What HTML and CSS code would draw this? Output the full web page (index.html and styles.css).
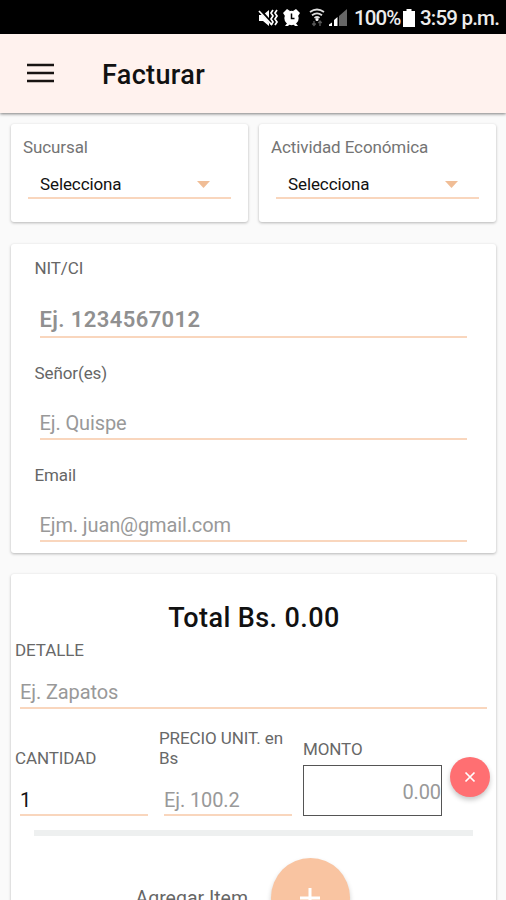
FILE: index.html
```html
<!DOCTYPE html>
<html lang="es">
<head>
<meta charset="utf-8">
<title>Facturar</title>
<link rel="stylesheet" href="styles.css">
</head>
<body>
<div class="status">
  <svg class="status-icons" width="92" height="20" viewBox="0 0 92 20" fill="#fff">
    <path d="M1 7h4l6-5v16l-6-5H1z"/>
    <path d="M2 2l13 15" stroke="#000" stroke-width="3"/>
    <path d="M1 3l13 14" stroke="#fff" stroke-width="1.7"/>
    <path d="M15 2l-2 3 2 3-2 3 2 3-2 3M19 2l-2 3 2 3-2 3 2 3-2 3" fill="none" stroke="#fff" stroke-width="1.7"/>
    <circle cx="33.500" cy="10" r="7.200"/>
    <path d="M25 5l4-4 3 2-5 5zM42 5l-4-4-3 2 5 5zM27 18l3-4 2 2-2 2zM40 18l-3-4-2 2 2 2z"/>
    <path d="M33.500 5.500v5h3" fill="none" stroke="#000" stroke-width="1.500"/>
    <path d="M52 4q7-5 14 0M54 7.300q5-3.700 10 0M56.500 10q2.500-2 5 0" fill="none" stroke="#ddd" stroke-width="1.800"/>
    <circle cx="59" cy="11.500" r="1.500"/>
    <path d="M56 13v5M54.300 15.500l1.700 2 1.700-2M62 18v-5M60.300 15l1.700-2 1.700 2" fill="none" stroke="#555" stroke-width="1.400"/>
    <path d="M71 18v-1.500l3-2V18zM76 18v-6l3.500-3v9z"/>
    <path d="M81 18V8l8-7v17z" fill="#666"/>
  </svg>
  <span class="battery-level">100%</span>
  <svg class="battery" width="12" height="18" viewBox="0 0 12 18"><path d="M3.500 0h5v2H12v16H0V2h3.500z" fill="#fff"/></svg>
  <span class="clock">3:59 p.m.</span>
</div>
<header class="bar">
  <svg class="menu" width="27" height="20" viewBox="0 0 27 20"><path d="M0 2h27M0 10h27M0 18h27" stroke="#181412" stroke-width="2.400"/></svg>
  <h1 class="title">Facturar</h1>
</header>
<main class="content">
  <div class="selectors">
    <section class="card selector">
      <div class="label label-branch">Sucursal</div>
      <div class="select"><span class="select-text">Selecciona</span><i class="caret"></i></div>
    </section>
    <section class="card selector">
      <div class="label label-activity">Actividad Económica</div>
      <div class="select"><span class="select-text">Selecciona</span><i class="caret"></i></div>
    </section>
  </div>
  <section class="card client">
    <div class="label label-nit">NIT/CI</div>
    <div class="field field-nit"><span class="hint-nit">Ej. 1234567012</span></div>
    <div class="label label-name">Señor(es)</div>
    <div class="field"><span class="hint-name">Ej. Quispe</span></div>
    <div class="label label-email">Email</div>
    <div class="field"><span class="hint-email">Ejm. juan@gmail.com</span></div>
  </section>
  <section class="card invoice">
    <h2 class="total">Total Bs. 0.00</h2>
    <div class="label label-detail">DETALLE</div>
    <div class="field field-detail"><span class="hint-detail">Ej. Zapatos</span></div>
    <div class="item-row">
      <div class="quantity">
        <div class="label label-quantity">CANTIDAD</div>
        <div class="field field-small field-value">1</div>
      </div>
      <div class="price">
        <div class="label label-price">PRECIO UNIT. en Bs</div>
        <div class="field field-small"><span class="hint-price">Ej. 100.2</span></div>
      </div>
      <div class="amount">
        <div class="label label-amount">MONTO</div>
        <div class="amount-box">0.00</div>
      </div>
      <div class="remove"><svg width="12" height="12" viewBox="0 0 12 12"><path d="M1.500 1.500l9 9M10.500 1.500l-9 9" stroke="#fff" stroke-width="1.700"/></svg></div>
    </div>
    <div class="divider"></div>
    <div class="add-row">
      <span class="add-label">Agregar Item</span>
      <div class="add"><svg width="20" height="20" viewBox="0 0 20 20"><path d="M10 0v20M0 10h20" stroke="#fff" stroke-width="3"/></svg></div>
    </div>
  </section>
</main>
</body>
</html>
```
FILE: styles.css
```css
* { box-sizing: border-box; }
body {
  margin: 0;
  height: 900px;
  overflow: hidden;
  background: #fafafa;
  font-family: Roboto, "Liberation Sans", sans-serif;
  color: #111;
}
.status {
  height: 34px;
  background: #000;
  color: #ececec;
  display: flex;
  align-items: center;
  padding: 2px 0 0 258px;
  font-size: 20.500px;
  font-weight: 500;
  line-height: 24px;
  white-space: nowrap;
}
.status-icons { flex: none; }
.battery-level { width: 46px; margin-left: 4px; letter-spacing: -0.9px; }
.battery { flex: none; margin-left: 3px; }
.clock { margin-left: 5px; letter-spacing: -0.8px; }
.bar {
  height: 79px;
  background: #fff2ee;
  display: flex;
  align-items: center;
  padding-left: 26.500px;
  box-shadow: 0 1px 3px rgba(0, 0, 0, .5);
}
.menu { margin-top: -1px; }
.title { margin: 2px 0 0 48.500px; font-size: 27px; line-height: 32px; font-weight: 500; letter-spacing: 0.35px; }
.content { padding: 11px 10px 0 11px; }
.selectors { display: grid; grid-template-columns: 237px 237px; gap: 11px; }
.card { background: #fff; border-radius: 3px; box-shadow: 0 1px 3px rgba(0, 0, 0, .28); }
.selector { height: 98px; padding: 13px 17px 0 12px; }
.label { font-size: 17px; line-height: 20px; letter-spacing: -0.1px; color: #747474; }
.select {
  height: 30px;
  margin: 12px 0 0 5px;
  padding: 5px 21px 0 12px;
  border-bottom: 2px solid #f9d6bd;
  display: flex;
  justify-content: space-between;
  font-size: 17px;
  line-height: 20px;
  letter-spacing: -0.1px;
}
.caret {
  width: 13px;
  height: 7px;
  margin-top: 7px;
  background: #f0bd96;
  clip-path: polygon(0 0, 100% 0, 50% 100%);
}
.client { height: 309px; margin-top: 22px; padding: 14px 29px 0 23.500px; }
.client .label { color: #666; }
.field {
  height: 37px;
  margin: 20px 0 0 5px;
  padding-top: 8px;
  border-bottom: 2px solid #f9d6bd;
  font-size: 20px;
  line-height: 24px;
  letter-spacing: -0.12px;
  color: #999;
}
.field-nit { height: 40px; padding-top: 10px; font-size: 22px; font-weight: 600; letter-spacing: 0.4px; color: #909090; }
.label-name, .label-email { margin-top: 25px; }
.invoice { height: 360px; margin-top: 21px; padding: 28px 9px 0 4px; }
.total { margin: 0; padding-left: 6px; font-size: 27px; line-height: 32px; font-weight: 500; text-align: center; letter-spacing: 0.4px; }
.label-detail { margin-top: 6px; }
.field-detail { margin: 11px 0 0 5px; height: 38px; padding-top: 9px; }
.item-row { height: 88px; margin-top: 19px; display: grid; grid-template-columns: 133px 133px 139px 40px; column-gap: 11px; }
.invoice .label { color: #686868; }
.quantity { padding-top: 20px; }
.quantity .field { margin-right: 0.500px; }
.field-small { height: 38px; margin-top: 10px; padding-top: 10px; }
.field-value { color: #111; }
.amount { padding-top: 11px; }
.amount-box {
  height: 51px;
  margin-top: 6px;
  padding-top: 14px;
  border: 1px solid #555;
  font-size: 20px;
  line-height: 24px;
  text-align: right;
  text-indent: 0;
  letter-spacing: -0.1px;
  color: #999;
}
.remove {
  width: 40px;
  height: 40px;
  margin: 29px 0 0 -3.500px;
  border-radius: 50%;
  background: #ff6f72;
  box-shadow: 0 3px 5px rgba(0, 0, 0, .22);
  display: grid;
  place-items: center;
}
.divider { width: 439px; height: 6px; margin: 14px 0 0 19px; background: #eef0f0; }
.add-row { display: flex; align-items: center; margin: 22px 0 0 120.500px; }
.add-label { width: 135px; padding-top: 2px; font-size: 19.500px; line-height: 24px; color: #666; }
.add {
  width: 79px;
  height: 79px;
  border-radius: 50%;
  background: #f9c4a1;
  box-shadow: 0 3px 5px rgba(0, 0, 0, .2);
  display: grid;
  place-items: center;
}
```
